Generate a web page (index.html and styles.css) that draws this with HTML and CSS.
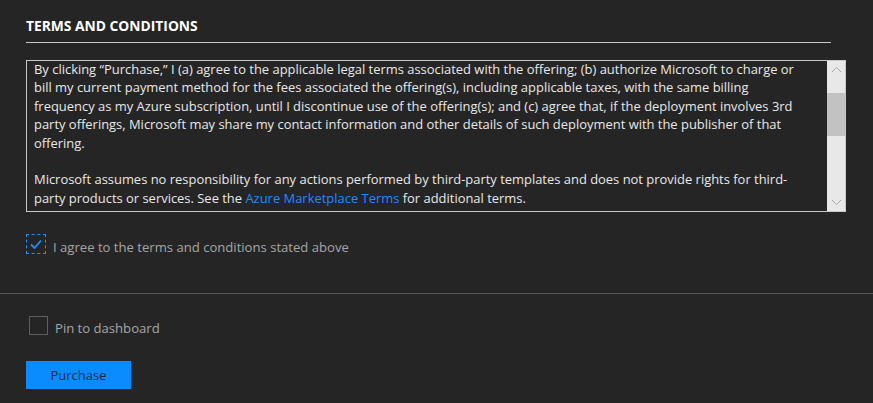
FILE: index.html
```html
<!DOCTYPE html>
<html>
<head>
<meta charset="utf-8">
<link rel="stylesheet" href="styles.css">
</head>
<body>
<div class="page">
  <section class="terms">
    <h2 class="terms-title">TERMS AND CONDITIONS</h2>
    <div class="terms-box">
      <div class="terms-text">
        <p>By clicking “Purchase,” I (a) agree to the applicable legal terms associated with the offering; (b) authorize Microsoft to charge or<br>bill my current payment method for the fees associated the offering(s), including applicable taxes, with the same billing<br>frequency as my Azure subscription, until I discontinue use of the offering(s); and (c) agree that, if the deployment involves 3rd<br>party offerings, Microsoft may share my contact information and other details of such deployment with the publisher of that<br>offering.</p>
        <p>Microsoft assumes no responsibility for any actions performed by third-party templates and does not provide rights for third-<br>party products or services. See the <a class="link" href="#">Azure Marketplace Terms</a> for additional terms.</p>
      </div>
      <div class="scrollbar">
        <div class="sb-arrow">
          <svg width="11" height="7" viewBox="0 0 11 7"><path d="M1 6 L5.5 1.5 L10 6" fill="none" stroke="#a8a8a8" stroke-width="1"/></svg>
        </div>
        <div class="sb-track"><div class="sb-thumb"></div></div>
        <div class="sb-arrow">
          <svg width="11" height="7" viewBox="0 0 11 7"><path d="M1 1 L5.5 5.5 L10 1" fill="none" stroke="#a8a8a8" stroke-width="1"/></svg>
        </div>
      </div>
    </div>
    <label class="check-row agree">
      <span class="checkbox focused">
        <svg width="12" height="11" viewBox="0 0 12 11"><path d="M1 5.5 L4.5 9 L11 1.5" fill="none" stroke="#1e90ff" stroke-width="1.8"/></svg>
      </span>
      <span class="check-label">I agree to the terms and conditions stated above</span>
    </label>
  </section>
  <div class="separator"></div>
  <section class="footer">
    <label class="check-row pin">
      <span class="checkbox plain"></span>
      <span class="check-label">Pin to dashboard</span>
    </label>
    <button class="purchase">Purchase</button>
  </section>
</div>
</body>
</html>
```
FILE: styles.css
```css
html, body {
  margin: 0;
  padding: 0;
  background: #252525;
}
body {
  font-family: "Open Sans", "Noto Sans", "Liberation Sans", sans-serif;
  font-size: 12px;
  color: #e6e6e6;
}
.page {
  width: 873px;
  height: 403px;
  overflow: hidden;
}
.terms {
  padding: 0 0 0 26px;
}
.terms-title {
  margin: 0;
  width: 805px;
  padding-top: 18px;
  padding-bottom: 8px;
  line-height: 16px;
  font-size: 13.8px;
  font-weight: 700;
  color: #ffffff;
  border-bottom: 1px solid #c8c8c8;
}
.terms-box {
  margin-top: 17px;
  width: 818px;
  height: 150px;
  border: 1px solid #c8c8c8;
  display: flex;
}
.terms-text {
  flex: 1;
  padding: 0 7px;
  line-height: 18.4px;
  font-size: 12.95px;
  color: #e8e8e8;
  overflow: hidden;
  white-space: nowrap;
}
.terms-text p {
  margin: 0 0 18.4px 0;
}
.terms-text p:first-child {
  margin-top: -1px;
}
.link {
  color: #1a8cff;
  text-decoration: none;
}
.scrollbar {
  width: 18px;
  flex: none;
  background: #e8e8e8;
  display: flex;
  flex-direction: column;
}
.sb-arrow {
  height: 17px;
  display: flex;
  align-items: center;
  justify-content: center;
}
.sb-track {
  flex: 1;
  padding-top: 15px;
}
.sb-thumb {
  height: 43px;
  background: #c2c2c2;
}
.check-row {
  display: flex;
  align-items: center;
}
.agree {
  margin-top: 22px;
  height: 20px;
}
.checkbox {
  box-sizing: border-box;
  display: flex;
  align-items: center;
  justify-content: center;
  flex: none;
}
.checkbox.focused {
  width: 20px;
  height: 20px;
  border: 1px dashed #1e90ff;
}
.checkbox.plain {
  width: 19px;
  height: 19px;
  border: 1px solid #5e5e5e;
  margin-left: 3px;
}
.check-label {
  color: #a6a6a6;
  font-size: 13.1px;
  padding-top: 5px;
}
.agree .check-label {
  margin-left: 7px;
}
.pin .check-label {
  margin-left: 7px;
}
.separator {
  margin-top: 39px;
  height: 1px;
  background: #555555;
}
.footer {
  padding-left: 26px;
}
.pin {
  margin-top: 21px;
  height: 20px;
}
.purchase {
  display: block;
  margin-top: 26px;
  width: 105px;
  height: 28px;
  border: none;
  background: #0a8cff;
  color: #1e2a3a;
  font-family: inherit;
  font-size: 13px;
  padding: 0;
}
```
